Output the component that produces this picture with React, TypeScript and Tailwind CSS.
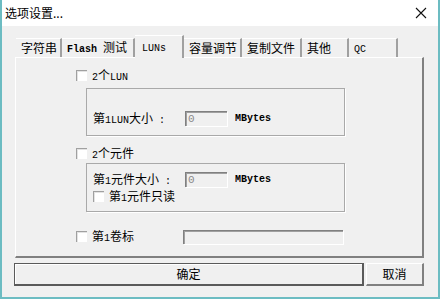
const cjk = "font-['SimSun','Noto_Sans_CJK_SC',sans-serif]";
const mono = "font-['Liberation_Mono','Noto_Sans_CJK_SC',monospace]";

// split ascii runs (narrow bitmap-like) from CJK runs
function Label({ text, className = "", boldAscii = false }: { text: string; className?: string; boldAscii?: boolean }) {
    const parts = text.match(/[\x20-\x7e]+|[^\x20-\x7e]+/g) || [];
    return (
        <span className={`leading-none whitespace-pre ${className}`}>
            {parts.map((p, i) =>
                /^[\x20-\x7e]+$/.test(p) ? (
                    <span key={i} className={`${mono} text-[10px] ${boldAscii ? "font-bold" : ""}`}>{p}</span>
                ) : (
                    <span key={i} className={`${cjk} text-[12px]`}>{p}</span>
                )
            )}
        </span>
    );
}

function CheckBox() {
    return <div className="w-[11px] h-[11px] shrink-0 bg-white border-t border-l border-[#a0a0a0] shadow-[inset_1px_1px_0_#e3e3e3]" />;
}

function Field({ w, h, value }: { w: string; h: string; value?: string }) {
    return (
        <div className={`${w} ${h} shrink-0 bg-[#f0f0f0] border-t border-l border-[#808080] shadow-[inset_1px_1px_0_#a0a0a0,1px_1px_0_#ffffff] flex items-center pl-[2px] text-[11px] text-[#8a8a8a] ${mono}`}>
            {value}
        </div>
    );
}

const tabs = [
    { label: "字符串", w: "w-[46px]" },
    { label: "Flash 测试", w: "w-[73px]" },
    { label: "LUNs", w: "w-[49px]", active: true },
    { label: "容量调节", w: "w-[58px]" },
    { label: "复制文件", w: "w-[60px]" },
    { label: "其他", w: "w-[47px]" },
    { label: "QC", w: "w-[49px]" },
];

export default function App() {
    return (
        <div className="w-[440px] h-[299px] bg-[#f0f0f0] flex flex-col border-x-2 border-b-2 border-[#6cbcc2] text-[12px] text-black overflow-hidden">
            {/* Title bar */}
            <div className="h-[26px] shrink-0 bg-white flex items-center justify-between pl-[3px] pr-[8px]">
                <span className="text-[12px] font-['Noto_Sans_CJK_SC',sans-serif] leading-none">选项设置...</span>
                <svg width="12" height="12" viewBox="0 0 12 12" className="mr-[3px]">
                    <path d="M1 1L11 11M11 1L1 11" stroke="#111" strokeWidth="1.1" />
                </svg>
            </div>

            {/* Tabs */}
            <div className="flex items-end h-[31px] pl-[14px] shrink-0">
                {tabs.map((t) => (
                    <div
                        key={t.label}
                        className={`${t.w} ${t.active ? "h-[23px] bg-[#f0f0f0] -mb-px z-10 pl-[7px]" : "h-[19px] pl-[5px]"} flex items-center border-r-2 border-[#a0a0a0] border-t border-t-white`}
                    >
                        <Label text={t.label} boldAscii={t.label === "Flash 测试"} />
                    </div>
                ))}
            </div>

            {/* Panel */}
            <div className="ml-[13px] w-[409px] h-[201px] shrink-0 border-t border-l border-white border-r-2 border-b-2 border-r-[#808080] border-b-[#808080] flex flex-col pl-[60px] pt-[12px]">
                <div className="flex items-center gap-[5px] h-[11px]">
                    <CheckBox />
                    <Label text="2个LUN" />
                </div>
                <div className="ml-[10px] mt-[7px] w-[259px] h-[48px] border border-[#a9a9a9] shadow-[1px_1px_0_#ffffff] pl-[6px] pt-[22px]">
                    <div className="flex items-center h-[15px]">
                        <Label text="第1LUN大小 :" className="w-[92px]" />
                        <Field w="w-[42px]" h="h-[15px]" value="0" />
                        <span className={`${mono} text-[10px] font-bold ml-[8px] leading-none`}>MBytes</span>
                    </div>
                </div>

                <div className="flex items-center gap-[5px] h-[11px] mt-[12px]">
                    <CheckBox />
                    <Label text="2个元件" />
                </div>
                <div className="ml-[10px] mt-[4px] w-[259px] h-[49px] border border-[#a9a9a9] shadow-[1px_1px_0_#ffffff] pl-[6px] pt-[8px] flex flex-col">
                    <div className="flex items-center h-[15px]">
                        <Label text="第1元件大小 :" className="w-[92px]" />
                        <Field w="w-[42px]" h="h-[15px]" value="0" />
                        <span className={`${mono} text-[10px] font-bold ml-[8px] leading-none`}>MBytes</span>
                    </div>
                    <div className="flex items-center gap-[5px] h-[11px] mt-[4px]">
                        <CheckBox />
                        <Label text="第1元件只读" />
                    </div>
                </div>

                <div className="flex items-center h-[15px] mt-[17px]">
                    <CheckBox />
                    <Label text="第1卷标" className="ml-[5px] w-[91px]" />
                    <Field w="w-[160px]" h="h-[14px]" />
                </div>
            </div>

            {/* Buttons */}
            <div className="flex mt-[5px] ml-[12px] gap-[2px]">
                <button className={`w-[350px] h-[23px] border-2 border-t border-l border-[#5a5a5a] bg-[#f0f0f0] shadow-[inset_1px_1px_0_#ffffff] ${cjk} text-[12px] leading-none`}>
                    确定
                </button>
                <button className={`w-[58px] h-[23px] border-t border-l border-white border-r-2 border-b-2 border-r-[#808080] border-b-[#808080] bg-[#f0f0f0] ${cjk} text-[12px] leading-none`}>
                    取消
                </button>
            </div>
        </div>
    );
}
